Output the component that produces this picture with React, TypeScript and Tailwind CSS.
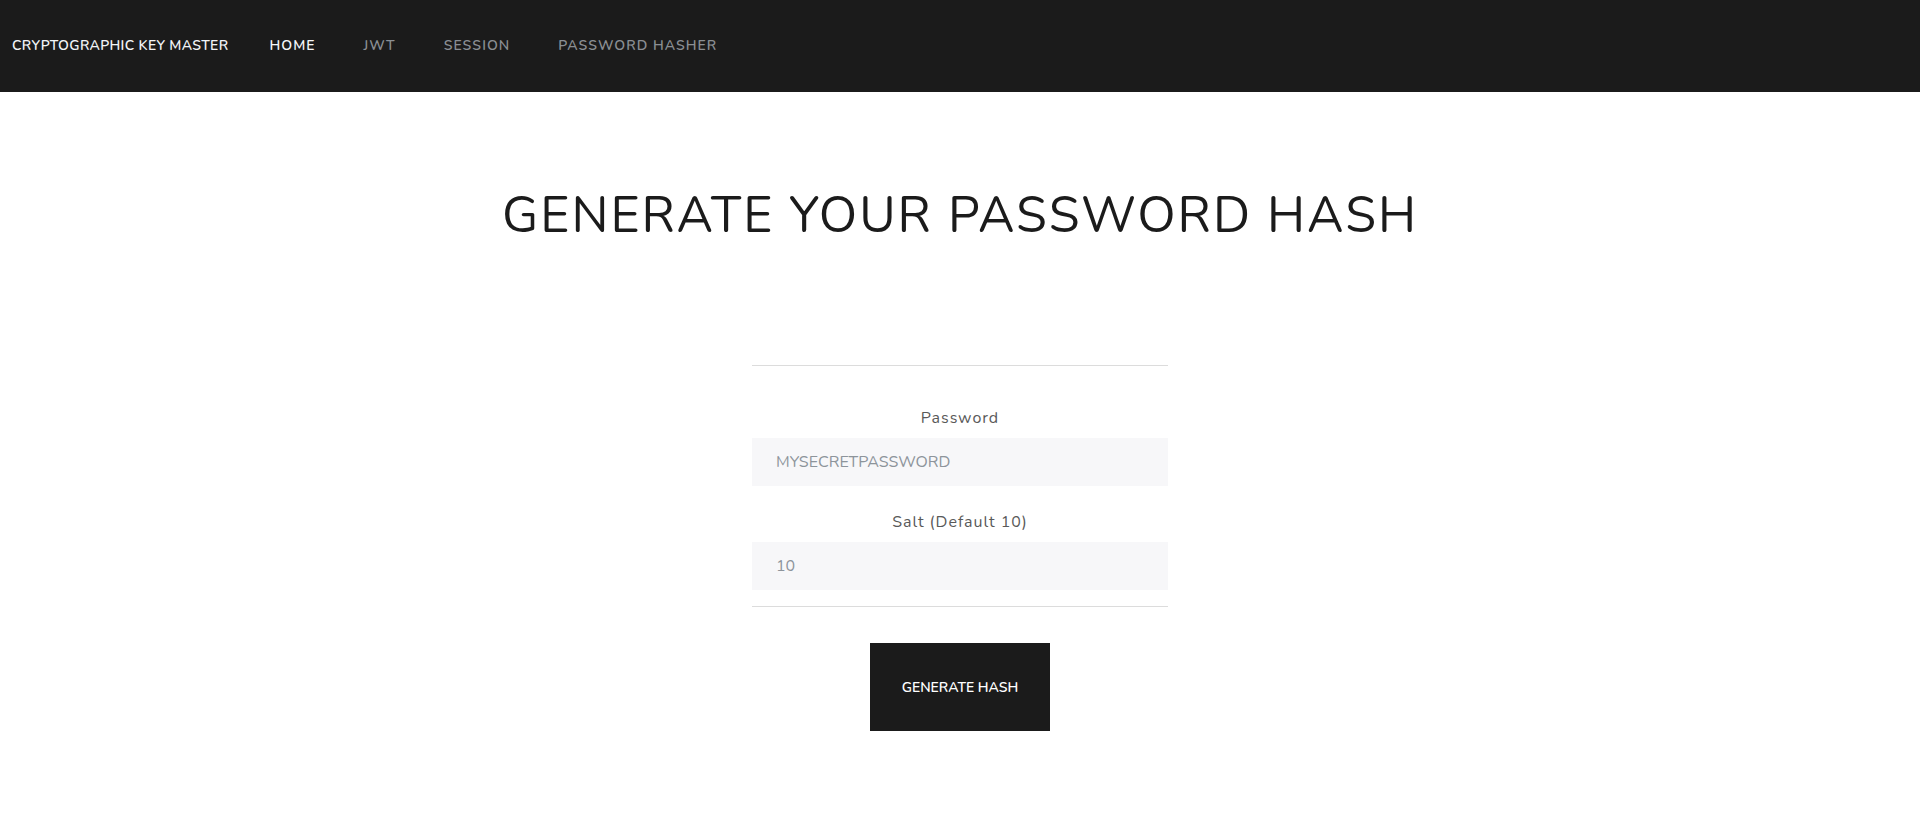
import { useState } from "react";

const links = [
  { label: "HOME", active: true },
  { label: "JWT", active: false },
  { label: "SESSION", active: false },
  { label: "PASSWORD HASHER", active: false },
];

const font = { fontFamily: "Nunito, Lato, 'Noto Sans', sans-serif" };

export default function App() {
  const [password, setPassword] = useState("");
  const [salt, setSalt] = useState("");

  return (
    <div className="min-h-screen bg-white" style={font}>
      <nav className="flex h-[92px] items-center bg-[#1b1b1b] px-3 pb-[2px]">
        <a href="#" className="mr-[17px] text-[14px] font-semibold tracking-[0.35px] text-[#f2f4f7]">
          CRYPTOGRAPHIC KEY MASTER
        </a>
        <ul className="flex">
          {links.map((l) => (
            <li key={l.label}>
              <a
                href="#"
                className={`block px-6 text-[14px] font-semibold tracking-[0.075em] ${
                  l.active ? "text-[#f5f7fa]" : "text-[#8a8e93]"
                }`}
              >
                {l.label}
              </a>
            </li>
          ))}
        </ul>
      </nav>

      <main className="flex flex-col items-center">
        <h1 className="mt-[94px] text-[50px] leading-[1.2] font-normal tracking-[0.04em] text-[#1b1b1b]">
          GENERATE YOUR PASSWORD HASH
        </h1>

        {/* formulário centralizado entre duas linhas finas */}
        <form className="mt-[119px] w-[416px]" onSubmit={(e) => e.preventDefault()}>
          <div className="border-y border-[#dcdcdc] pt-[40px] pb-4">
            <label className="block text-center text-[16px] leading-6 tracking-[0.06em] text-[#595959]">
              Password
            </label>
            <input
              value={password}
              onChange={(e) => setPassword(e.target.value)}
              placeholder="MYSECRETPASSWORD"
              className="mt-2 h-12 w-full bg-[#f7f7f9] px-6 text-[16px] text-[#8d949b] outline-none placeholder:text-[#8d949b]"
            />
            <label className="mt-6 block text-center text-[16px] leading-6 tracking-[0.06em] text-[#595959]">
              Salt (Default 10)
            </label>
            <input
              value={salt}
              onChange={(e) => setSalt(e.target.value)}
              placeholder="10"
              className="mt-2 h-12 w-full bg-[#f7f7f9] px-6 text-[16px] text-[#8d949b] outline-none placeholder:text-[#8d949b]"
            />
          </div>
          <div className="flex justify-center pt-9">
            <button
              type="submit"
              className="h-[88px] w-[180px] bg-[#1b1b1b] text-[14px] font-semibold text-white"
            >
              GENERATE HASH
            </button>
          </div>
        </form>
      </main>
    </div>
  );
}
